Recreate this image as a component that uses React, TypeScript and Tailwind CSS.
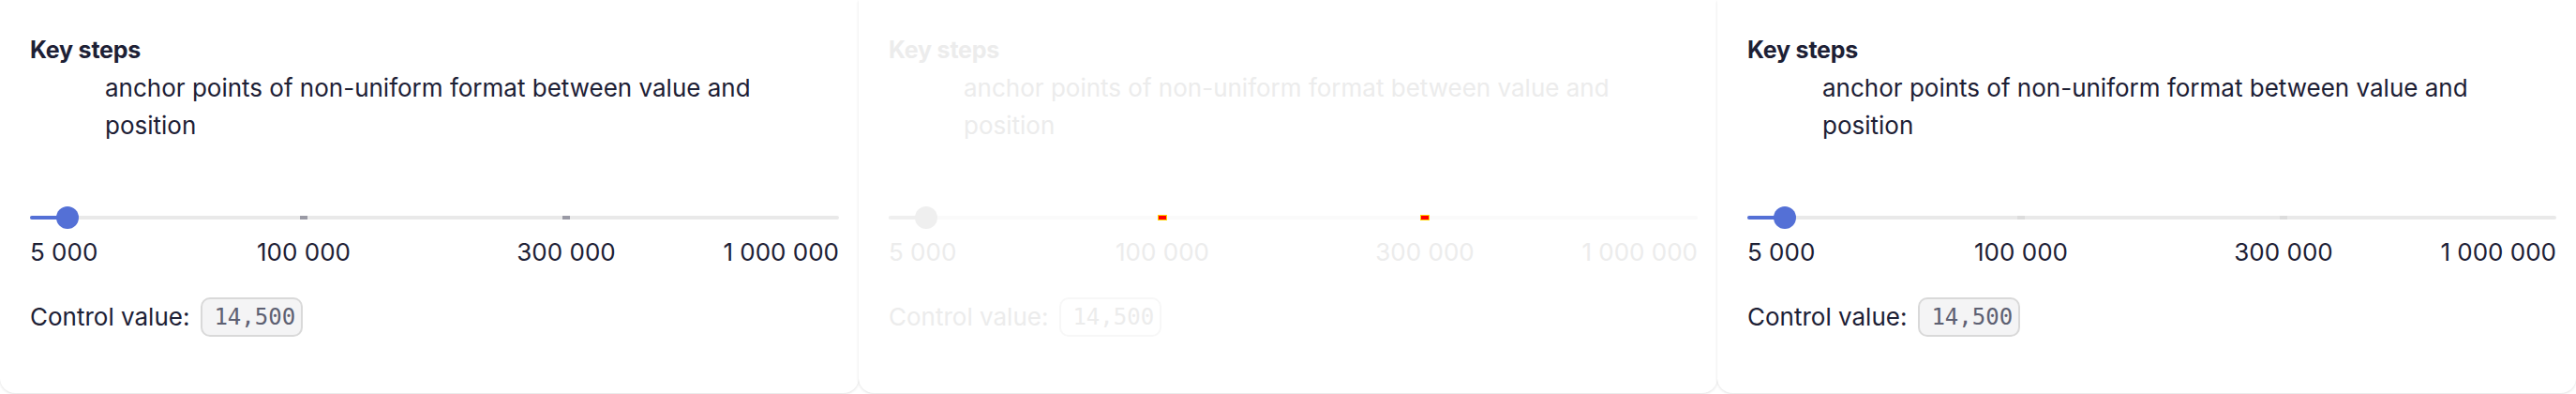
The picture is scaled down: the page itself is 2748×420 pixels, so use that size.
import React from "react";

type Variant = "normal" | "disabled" | "light";

function Card({ variant }: { variant: Variant }) {
  const faded = variant === "disabled";
  const textCls = faded ? "text-[#ececec]" : "text-[#1d2035]";
  const thumbCls = faded ? "bg-[#efefef]" : "bg-[#5470d6]";
  const activeCls = faded ? "bg-[#efefef]" : "bg-[#5470d6]";
  const trackCls = faded ? "bg-[#fafafa]" : "bg-[#e9e9e9]";
  const tickCls =
    variant === "normal"
      ? "bg-[#9a9aa5]"
      : variant === "light"
      ? "bg-[#dcdcdc]"
      : "bg-[#ff0000] ring-1 ring-[#ffd400]";
  const badgeCls = faded
    ? "border-[#f7f7f7] bg-white text-[#ececec]"
    : "border-[#d9d9d9] bg-[#f4f4f5] text-[#5d6072]";

  return (
    <div className="w-[916px] h-[419px] shrink-0 bg-white rounded-b-[16px] shadow-[0_1px_3px_rgba(0,0,0,0.12)] pl-[32px] pr-[21px] pt-[37px] flex flex-col">
      <div className={`text-[25px] leading-[32px] font-bold tracking-[-0.2px] ${textCls}`}>Key steps</div>
      <div className={`ml-[80px] mt-[5px] w-[771px] text-[26px] leading-[40px] ${textCls}`}>
        anchor points of non-uniform format between value and position
      </div>
      <div className="relative mt-[66px] h-[24px] flex items-center">
        <div className={`w-full h-[4px] rounded-full ${trackCls}`} />
        <div className={`absolute left-0 top-[10px] h-[4px] w-[40px] rounded-l-full ${activeCls}`} />
        <div className={`absolute left-[288px] top-[10px] h-[4px] w-[8px] ${tickCls}`} />
        <div className={`absolute left-[568px] top-[10px] h-[4px] w-[8px] ${tickCls}`} />
        <div className={`absolute left-[28px] top-0 h-[24px] w-[24px] rounded-full ${thumbCls}`} />
      </div>
      <div
        className={`mt-[7px] grid grid-cols-[146px_292px_268px_157px] text-[26px] leading-[36px] whitespace-nowrap ${textCls}`}
      >
        <span className="text-left">5 000</span>
        <span className="text-center">100 000</span>
        <span className="text-center">300 000</span>
        <span className="text-right">1 000 000</span>
      </div>
      <div className="mt-[30px] flex items-center gap-[12px]">
        <span className={`text-[26px] leading-[36px] ${textCls}`}>Control value:</span>
        <span
          className={`h-[42px] w-[109px] flex items-center pl-[12px] rounded-[10px] border-2 text-[24px] ${badgeCls}`}
          style={{ fontFamily: '"DejaVu Sans Mono", monospace' }}
        >
          14,500
        </span>
      </div>
    </div>
  );
}

export default function App() {
  return (
    <div
      className="w-[2748px] h-[420px] bg-white flex overflow-hidden"
      style={{ fontFamily: 'Inter, "Noto Sans", sans-serif' }}
    >
      <Card variant="normal" />
      <Card variant="disabled" />
      <Card variant="light" />
    </div>
  );
}
